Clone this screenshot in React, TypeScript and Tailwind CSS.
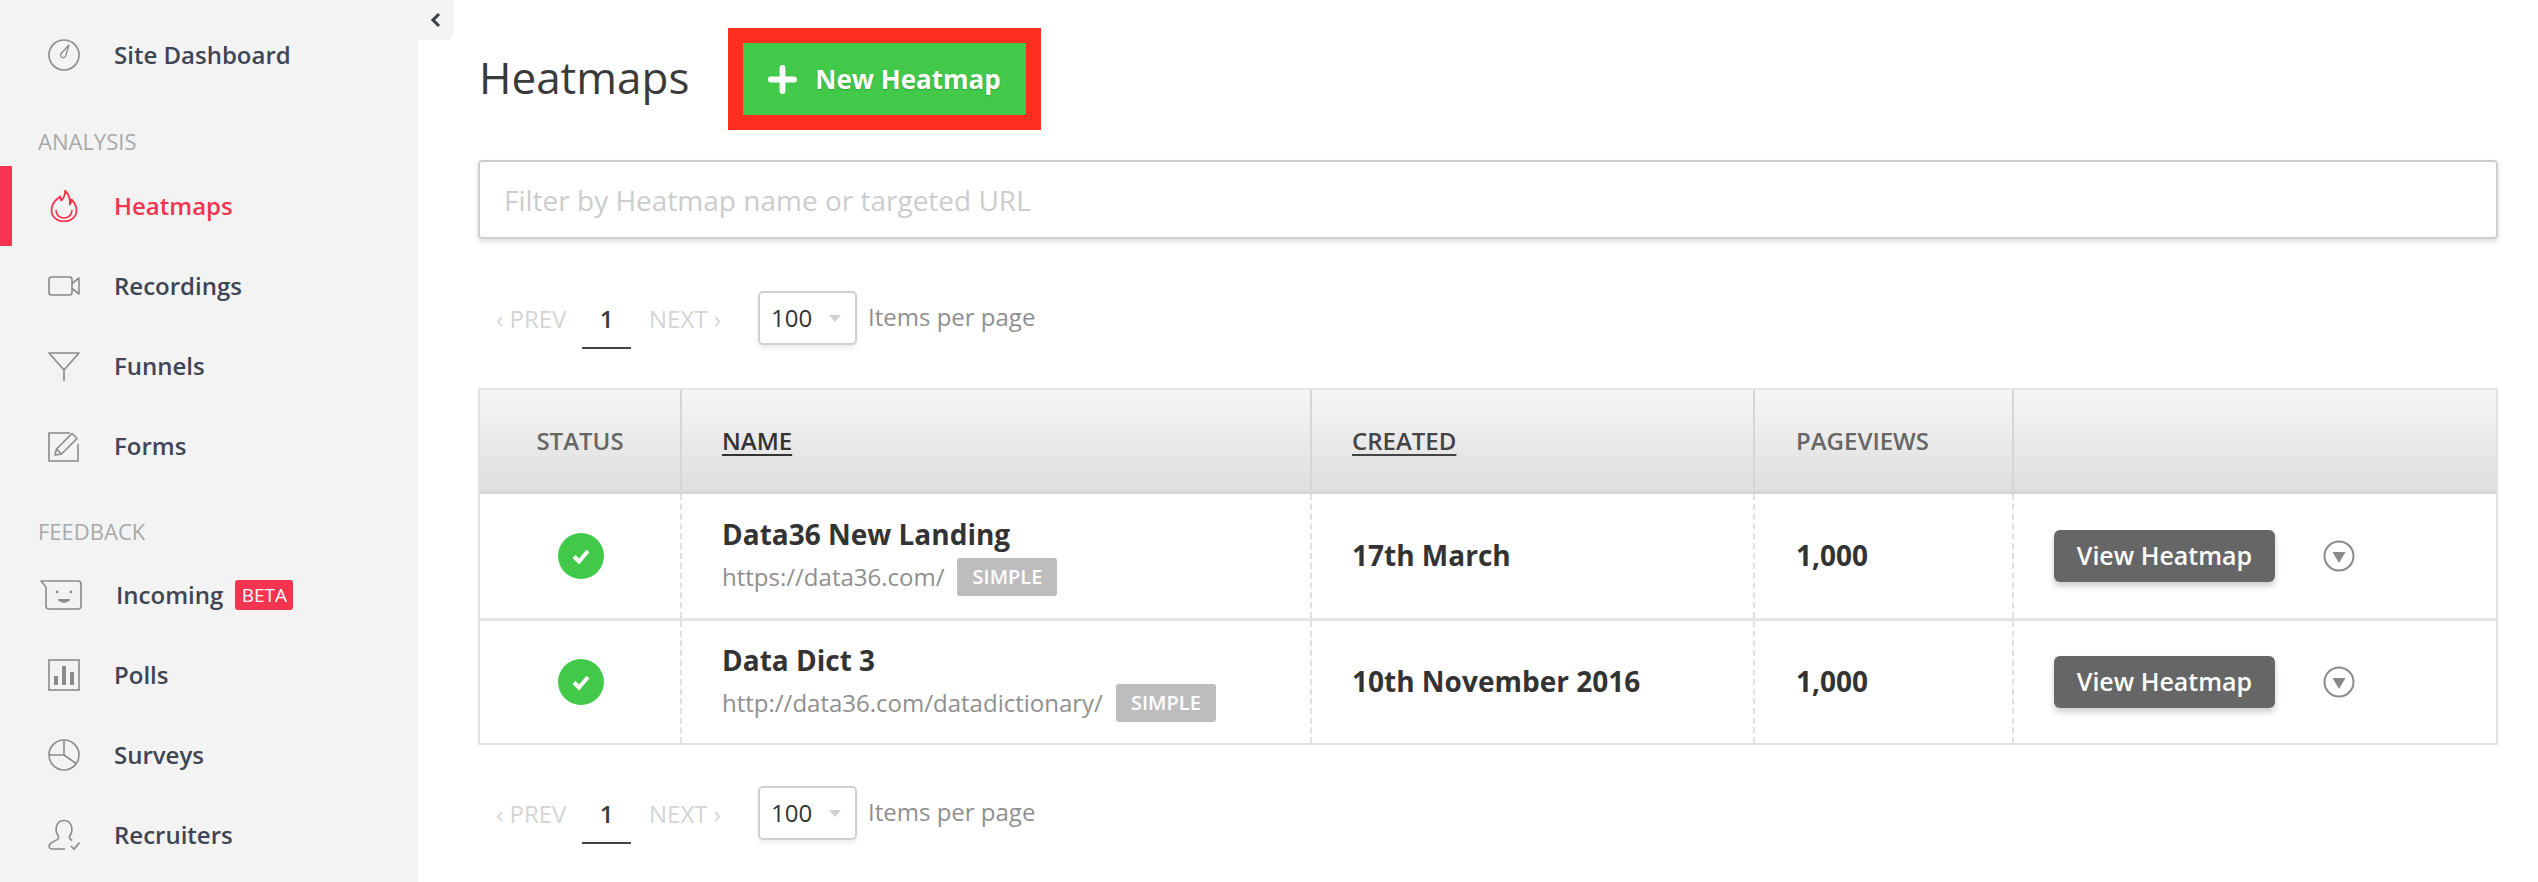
import type { ReactNode } from 'react';

const font = "font-['Open_Sans',sans-serif]";

function Svg({ children, className = 'w-8 h-8 text-[#8a8a8a]' }: { children: ReactNode; className?: string }) {
  return (
    <svg viewBox="0 0 32 32" fill="none" stroke="currentColor" strokeWidth="1.6" className={`${className} shrink-0`}>
      {children}
    </svg>
  );
}

const icons: Record<string, ReactNode> = {
  dashboard: (
    <Svg>
      <circle cx="16" cy="16" r="15" />
      <path d="M21 6l-3.2 10.6a2.6 2.6 0 1 1-4.2-2.6z" strokeWidth="1.3" strokeLinejoin="round" />
    </Svg>
  ),
  heatmaps: (
    <Svg className="w-8 h-8 text-[#f5344f]">
      <path
        d="M17 0.500c1 5-1.500 7.500-3.500 10-.8-1.300-1.200-2.500-1.300-4C7 10 3.500 15 3.500 20.500 3.500 27 9 31.500 16 31.500s12.500-4.500 12.500-11c0-4-1.500-7.500-5-11 0 2.200-.5 3.800-1.700 5C22.500 9 20.500 4 17 0.500z"
        strokeWidth="1.8"
        strokeLinejoin="round"
      />
      <path d="M8 20c0 5 3.500 8 8 8s8-3 8-8" strokeWidth="1.600" />
    </Svg>
  ),
  recordings: (
    <Svg>
      <rect x="1" y="7" width="23" height="18" rx="2.500" />
      <path d="M24 13.500L31 8v16l-7-5.500" strokeLinejoin="round" />
    </Svg>
  ),
  funnels: (
    <Svg>
      <path d="M1 3h30L16 20z M16 20v11" strokeLinejoin="round" />
    </Svg>
  ),
  forms: (
    <Svg>
      <path d="M22 3H1v28h29V14" />
      <path d="M7 25l1.500-6L24 3.500l5 5L13.500 24z M8.500 19l5 5" strokeLinejoin="round" />
    </Svg>
  ),
  incoming: (
    <svg viewBox="0 0 42 32" fill="none" stroke="#8a8a8a" strokeWidth="1.6" className="-ml-2 h-8 w-[42px] shrink-0">
      <path d="M1 2h37a3 3 0 0 1 3 3v22a3 3 0 0 1-3 3H9a3 3 0 0 1-3-3V8z" strokeLinejoin="round" />
      <circle cx="17" cy="13" r="1.400" fill="#8a8a8a" stroke="none" />
      <circle cx="31" cy="13" r="1.400" fill="#8a8a8a" stroke="none" />
      <path d="M18 20h12c-1 5-11 5-12 0z" fill="#8a8a8a" stroke="none" />
    </svg>
  ),
  polls: (
    <Svg>
      <rect x="1" y="1" width="30" height="30" />
      <path d="M8 26v-9 M16 26V7 M24 26V13" strokeWidth="4" />
    </Svg>
  ),
  surveys: (
    <Svg>
      <circle cx="16" cy="16" r="15" />
      <path d="M16 1v15H1 M16 16l12 8.500" />
    </Svg>
  ),
  recruiters: (
    <Svg>
      <path d="M17 30H4c-3 0-3.500-3-2-5 2-2.500 6-3 8-5 1-1.500.5-3-.5-4.500-2.500-3.500-2-14 6.500-14s9 10.500 6.500 14c-1 1.500-1.500 3-.5 4.500l2 1.500" />
      <path d="M23 27l3 3 5.500-6.500" />
    </Svg>
  ),
};

function NavItem({ icon, label, active, beta }: { icon: string; label: string; active?: boolean; beta?: boolean }) {
  return (
    <div className={`flex h-20 items-center ${active ? 'border-l-[12px] border-[#f5344f] pl-9' : 'pl-12'}`}>
      {icons[icon]}
      <span className={`ml-[34px] -mt-[1px] text-[24px] font-semibold ${active ? 'text-[#f5344f]' : 'text-[#3f4553]'}`}>{label}</span>
      {beta && (
        <span className="ml-3 flex h-[30px] w-[58px] items-center justify-center rounded-[3px] bg-[#f5344f] text-[19px] text-white">
          BETA
        </span>
      )}
    </div>
  );
}

function Sidebar() {
  return (
    <aside className="relative w-[418px] shrink-0 bg-[#f3f3f3] pt-[15px]">
      {/* collapse tab hangs over the content edge */}
      <div className="absolute left-[418px] top-0 flex h-10 w-9 items-center justify-center rounded-br-lg bg-[#f3f3f3]">
        <svg viewBox="0 0 12 16" className="h-4 w-3 text-[#3a3f4a]" fill="none" stroke="currentColor" strokeWidth="3">
          <path d="M9 2L3 8l6 6" />
        </svg>
      </div>
      <NavItem icon="dashboard" label="Site Dashboard" />
      <div className="pb-[9px] pl-[38px] pt-[30px] text-[22px] leading-8 text-[#a9a9a9]">ANALYSIS</div>
      <NavItem icon="heatmaps" label="Heatmaps" active />
      <NavItem icon="recordings" label="Recordings" />
      <NavItem icon="funnels" label="Funnels" />
      <NavItem icon="forms" label="Forms" />
      <div className="pb-2 pl-[38px] pt-[29px] text-[22px] leading-8 text-[#a9a9a9]">FEEDBACK</div>
      <NavItem icon="incoming" label="Incoming" beta />
      <NavItem icon="polls" label="Polls" />
      <NavItem icon="surveys" label="Surveys" />
      <NavItem icon="recruiters" label="Recruiters" />
    </aside>
  );
}

function Pagination() {
  return (
    <div className="flex h-[58px] pl-[18px] text-[24px]">
      <span className="mt-[10px] w-[70px] whitespace-nowrap text-[#d4d4d4]">‹ PREV</span>
      <span className="ml-4 flex h-[58px] w-[49px] items-center justify-center border-b-2 border-[#444] font-semibold text-[#3a3a3a]">1</span>
      <span className="ml-[18px] mt-[10px] w-[71px] whitespace-nowrap text-[#d4d4d4]">NEXT ›</span>
      <div className="ml-[38px] flex h-[54px] w-[99px] items-center justify-between rounded-[5px] border-2 border-[#d0d0d0] pl-[11px] pr-[14px] text-[#333] shadow-[0_3px_5px_rgba(0,0,0,0.08)]">
        100
        <span className="h-0 w-0 border-x-[6px] border-t-[7px] border-x-transparent border-t-[#cfcfcf]" />
      </div>
      <span className="ml-[11px] mt-[8px] whitespace-nowrap text-[#8f8f8f]">Items per page</span>
    </div>
  );
}

const cols = 'grid grid-cols-[200px_630px_443px_259px_1fr]';

const rows = [
  { name: 'Data36 New Landing', url: 'https://data36.com/', created: '17th March', views: '1,000' },
  { name: 'Data Dict 3', url: 'http://data36.com/datadictionary/', created: '10th November 2016', views: '1,000' },
];

function HeatmapTable() {
  return (
    <div className="mt-[39px] border-2 border-[#e2e2e2] border-t-[#e6e6e6]">
      <div className={`${cols} h-[104px] border-b-[3px] border-[#d4d4d4] bg-gradient-to-b from-[#f6f6f6] to-[#dedede] text-[24px]`}>
        <div className="flex items-center justify-center font-semibold text-[#666]">STATUS</div>
        <div className="flex items-center border-l-2 border-[#d6d6d6] pl-[40px] font-semibold text-[#333] underline underline-offset-4">NAME</div>
        <div className="flex items-center border-l-2 border-[#d6d6d6] pl-[40px] font-semibold text-[#444] underline underline-offset-4">CREATED</div>
        <div className="flex items-center border-l-2 border-[#d6d6d6] pl-[41px] font-semibold text-[#666]">PAGEVIEWS</div>
        <div className="border-l-2 border-[#d6d6d6]" />
      </div>
      {rows.map((row, i) => (
        <div key={row.name} className={`${cols} ${i > 0 ? 'h-[125px] border-t-[3px] border-[#e4e4e4]' : 'h-[124px]'}`}>
          <div className="flex items-center justify-center">
            <span className="ml-[2px] flex h-[46px] w-[46px] items-center justify-center rounded-full bg-[#42c94a]">
              <svg viewBox="0 0 24 24" className="h-6 w-6" fill="none" stroke="#fff" strokeWidth="4">
                <path d="M5 12.500l5 5L19 7" />
              </svg>
            </span>
          </div>
          <div className="flex flex-col justify-center border-l-2 border-dashed border-[#e0e0e0] pl-[40px]">
            <div className="-mt-[1px] text-[28px] font-bold leading-9 text-[#333]">{row.name}</div>
            <div className="mt-[6px] flex items-center">
              <span className="text-[24px] text-[#8f8f8f]">{row.url}</span>
              <span className="ml-[13px] flex h-[38px] w-[100px] items-center justify-center rounded-[3px] bg-[#bdbdbd] text-[20px] font-semibold text-white">SIMPLE</span>
            </div>
          </div>
          <div className="flex items-center border-l-2 border-dashed border-[#e0e0e0] pb-[2px] pl-[40px] text-[28px] font-bold text-[#333]">{row.created}</div>
          <div className="flex items-center border-l-2 border-dashed border-[#e0e0e0] pb-[2px] pl-[41px] text-[28px] font-bold text-[#333]">{row.views}</div>
          <div className="flex items-center border-l-2 border-dashed border-[#e0e0e0] pl-[40px]">
            <button className="h-[52px] w-[221px] rounded-[6px] bg-[#666] text-[25px] font-semibold text-white shadow-[0_4px_6px_rgba(0,0,0,0.2)]">View Heatmap</button>
            <svg viewBox="0 0 32 32" className="ml-[48px] h-8 w-8" fill="none">
              <circle cx="16" cy="16" r="14.500" stroke="#8a8a8a" strokeWidth="2" />
              <path d="M9.500 12h13L16 23z" fill="#8a8a8a" />
            </svg>
          </div>
        </div>
      ))}
    </div>
  );
}

export default function App() {
  return (
    <div className={`flex h-[882px] w-[2538px] overflow-hidden bg-white ${font}`}>
      <Sidebar />
      <main className="flex-1 pl-[60px] pr-10 pt-[28px]">
        <div className="flex items-center">
          <h1 className="-mt-[4px] w-[250px] text-[44px] font-normal text-[#3a3a3a]">
            <span className="ml-[1px]">Heatmaps</span>
          </h1>
          <button className="box-content flex h-[71px] w-[283px] items-center justify-center border-[15px] border-[#ff2e1f] bg-[#42c94a] pt-[1px] text-[26px] font-bold text-white [text-shadow:0_1px_2px_rgba(0,0,0,0.2)]">
            <svg viewBox="0 0 30 30" className="mr-[18px] h-[29px] w-[29px]" fill="none" stroke="#fff" strokeWidth="6" strokeLinecap="round">
              <path d="M15 3v24 M3 15h24" />
            </svg>
            New Heatmap
          </button>
        </div>
        <input
          placeholder="Filter by Heatmap name or targeted URL"
          className="mt-[30px] block h-[79px] w-full rounded-[4px] border-2 border-[#cfcfcf] px-[24px] text-[28px] shadow-[0_3px_5px_rgba(0,0,0,0.12)] outline-none placeholder:text-[#cccccc]"
        />
        <div className="mt-[52px]">
          <Pagination />
        </div>
        <HeatmapTable />
        <div className="mt-[41px]">
          <Pagination />
        </div>
      </main>
    </div>
  );
}
